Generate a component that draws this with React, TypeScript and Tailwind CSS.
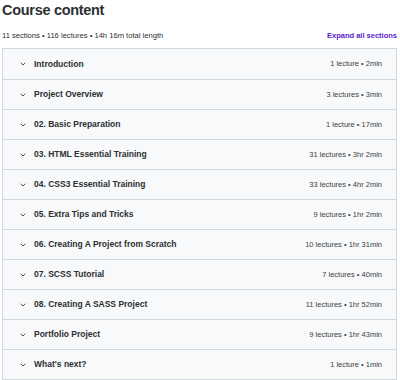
import { ChevronDown } from "lucide-react";

const sections = [
  { title: "Introduction", meta: "1 lecture • 2min" },
  { title: "Project Overview", meta: "3 lectures • 3min" },
  { title: "02. Basic Preparation", meta: "1 lecture • 17min" },
  { title: "03. HTML Essential Training", meta: "31 lectures • 3hr 2min" },
  { title: "04. CSS3 Essential Training", meta: "33 lectures • 4hr 2min" },
  { title: "05. Extra Tips and Tricks", meta: "9 lectures • 1hr 2min" },
  { title: "06. Creating A Project from Scratch", meta: "10 lectures • 1hr 31min" },
  { title: "07. SCSS Tutorial", meta: "7 lectures • 40min" },
  { title: "08. Creating A SASS Project", meta: "11 lectures • 1hr 52min" },
  { title: "Portfolio Project", meta: "9 lectures • 1hr 43min" },
  { title: "What's next?", meta: "1 lecture • 1min" },
];

export default function App() {
  return (
    <div className="w-[400px] h-[380px] bg-white text-[#2d2f31] font-['Liberation_Sans',Arial,sans-serif] overflow-hidden">
      <div className="pl-[2px] pr-[3px]">
        <h2 className="text-[14.5px] leading-[20px] font-bold tracking-[-0.3px] pt-[0px]">
          Course content
        </h2>
        <div className="flex items-center justify-between mt-[10px] h-[12px]">
          <span className="text-[7.6px] text-[#2d2f31]">
            11 sections • 116 lectures • 14h 16m total length
          </span>
          <span className="text-[7.5px] font-bold text-[#5624d0]">
            Expand all sections
          </span>
        </div>
        <div className="mt-[6px] border border-[#d1d7dc] bg-[#f7f9fa]">
          {sections.map((s, i) => (
            <div
              key={s.title}
              className={`flex items-center justify-between h-[30px] pl-[16px] pr-[14px] ${
                i > 0 ? "border-t border-[#d1d7dc]" : ""
              }`}
            >
              <div className="flex items-center gap-[7px]">
                <ChevronDown size={8} strokeWidth={2.5} />
                <span className="text-[8.5px] font-bold">{s.title}</span>
              </div>
              <span className="text-[7.5px] text-[#3e4143]">{s.meta}</span>
            </div>
          ))}
        </div>
      </div>
    </div>
  );
}
